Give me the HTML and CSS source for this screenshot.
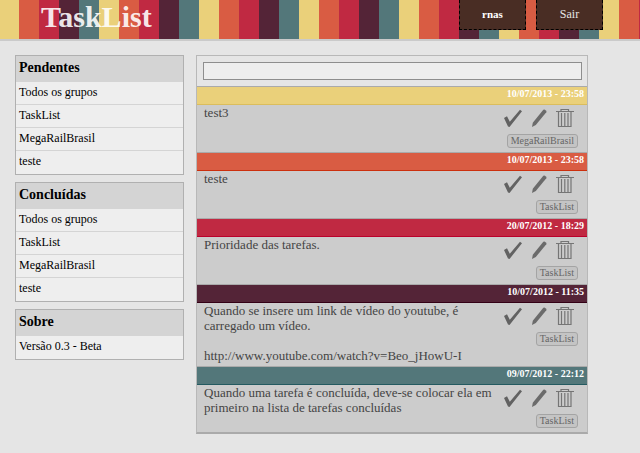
FILE: index.html
```html
<!DOCTYPE html>
<html lang="pt-BR">
<head>
<meta charset="utf-8">
<title>TaskList</title>
<link rel="stylesheet" href="styles.css">
</head>
<body>
<svg class="sprite" aria-hidden="true">
  <symbol id="check" viewBox="0 0 20 20"><path d="M1 10 4 8.300 6.800 13.800 17 1.800 19 3.300 6.500 19 5 18.500Z" fill="#626262"/></symbol>
  <symbol id="pencil" viewBox="0 0 20 20"><path d="M3 19 3.800 14.800 14.300 1.800 15.500 1.500 17.500 3 17.300 4.300 6.800 17Z" fill="#6b6b6b"/></symbol>
  <symbol id="trash" viewBox="0 0 20 20"><path d="M1 3.500H19M6 3V1.500H13.500V3M3.500 4V18.500H16V4M6.500 5V18M9.800 5V18M13 5V18" fill="none" stroke="#757575" stroke-width="1.200"/></symbol>
</svg>
<header class="top">
  <h1 class="logo">TaskList</h1>
  <nav class="nav">
    <a class="nav-item user" href="#">rnas</a>
    <a class="nav-item" href="#">Sair</a>
  </nav>
</header>
<div class="layout">
  <aside class="sidebar">
    <section class="panel">
      <h2>Pendentes</h2>
      <ul>
        <li><a href="#">Todos os grupos</a></li>
        <li><a href="#">TaskList</a></li>
        <li><a href="#">MegaRailBrasil</a></li>
        <li><a href="#">teste</a></li>
      </ul>
    </section>
    <section class="panel">
      <h2>Concluídas</h2>
      <ul>
        <li><a href="#">Todos os grupos</a></li>
        <li><a href="#">TaskList</a></li>
        <li><a href="#">MegaRailBrasil</a></li>
        <li><a href="#">teste</a></li>
      </ul>
    </section>
    <section class="panel">
      <h2>Sobre</h2>
      <ul>
        <li><a href="#">Versão 0.3 - Beta</a></li>
      </ul>
    </section>
  </aside>
  <main class="tasks">
    <form class="new-task"><input type="text" aria-label="Nova tarefa"></form>
    <article class="task">
      <div class="bar yellow"><time>10/07/2013 - 23:58</time></div>
      <div class="body">
        <p>test3</p>
        <div class="side">
          <div class="actions">
            <button type="button" aria-label="Concluir"><svg><use href="#check"/></svg></button>
            <button type="button" aria-label="Editar"><svg><use href="#pencil"/></svg></button>
            <button type="button" aria-label="Excluir"><svg><use href="#trash"/></svg></button>
          </div>
          <a class="tag" href="#">MegaRailBrasil</a>
        </div>
      </div>
    </article>
    <article class="task">
      <div class="bar orange"><time>10/07/2013 - 23:58</time></div>
      <div class="body">
        <p>teste</p>
        <div class="side">
          <div class="actions">
            <button type="button" aria-label="Concluir"><svg><use href="#check"/></svg></button>
            <button type="button" aria-label="Editar"><svg><use href="#pencil"/></svg></button>
            <button type="button" aria-label="Excluir"><svg><use href="#trash"/></svg></button>
          </div>
          <a class="tag" href="#">TaskList</a>
        </div>
      </div>
    </article>
    <article class="task">
      <div class="bar red"><time>20/07/2012 - 18:29</time></div>
      <div class="body">
        <p>Prioridade das tarefas.</p>
        <div class="side">
          <div class="actions">
            <button type="button" aria-label="Concluir"><svg><use href="#check"/></svg></button>
            <button type="button" aria-label="Editar"><svg><use href="#pencil"/></svg></button>
            <button type="button" aria-label="Excluir"><svg><use href="#trash"/></svg></button>
          </div>
          <a class="tag" href="#">TaskList</a>
        </div>
      </div>
    </article>
    <article class="task">
      <div class="bar wine"><time>10/07/2012 - 11:35</time></div>
      <div class="body">
        <p>Quando se insere um link de vídeo do youtube, é carregado um vídeo.<br><br>http://www.youtube.com/watch?v=Beo_jHowU-I</p>
        <div class="side">
          <div class="actions">
            <button type="button" aria-label="Concluir"><svg><use href="#check"/></svg></button>
            <button type="button" aria-label="Editar"><svg><use href="#pencil"/></svg></button>
            <button type="button" aria-label="Excluir"><svg><use href="#trash"/></svg></button>
          </div>
          <a class="tag" href="#">TaskList</a>
        </div>
      </div>
    </article>
    <article class="task">
      <div class="bar teal"><time>09/07/2012 - 22:12</time></div>
      <div class="body">
        <p>Quando uma tarefa é concluída, deve-se colocar ela em primeiro na lista de tarefas concluídas</p>
        <div class="side">
          <div class="actions">
            <button type="button" aria-label="Concluir"><svg><use href="#check"/></svg></button>
            <button type="button" aria-label="Editar"><svg><use href="#pencil"/></svg></button>
            <button type="button" aria-label="Excluir"><svg><use href="#trash"/></svg></button>
          </div>
          <a class="tag" href="#">TaskList</a>
        </div>
      </div>
    </article>
  </main>
</div>
</body>
</html>
```

FILE: styles.css
```css
* { box-sizing: border-box; }
body {
  margin: 0;
  background: #e5e5e5;
  color: #000;
  font-family: "Liberation Serif", "Times New Roman", serif;
}
h1, h2, p, ul { margin: 0; padding: 0; }
ul { list-style: none; }
a { color: inherit; text-decoration: none; }
.sprite { display: none; }

.top {
  display: flex;
  justify-content: space-between;
  align-items: flex-start;
  height: 41px;
  padding: 0 37px 0 41px;
  border-bottom: 2px solid #cacaca;
  background: repeating-linear-gradient(90deg, #ead07a 0 20px, #d95c43 20px 40px, #c02942 40px 60px, #542437 60px 80px, #53777a 80px 100px) -1px 0 / calc(100% + 1px) 100%;
}
.logo {
  color: rgba(255, 255, 255, 0.9);
  font-size: 30px;
  line-height: 34px;
}
.nav { display: flex; gap: 10px; }
.nav-item {
  width: 67px;
  height: 30px;
  border: 1px dashed #000;
  border-top: 0;
  background: #492d24;
  color: #e5e5e5;
  font-size: 12px;
  line-height: 28px;
  text-align: center;
}
.user { color: #fff; font-size: 11px; font-weight: bold; }

.layout {
  display: flex;
  align-items: flex-start;
  gap: 12px;
  padding: 14px 52px 20px 15px;
}
.sidebar {
  display: flex;
  flex: none;
  flex-direction: column;
  gap: 7px;
  width: 169px;
}
.panel { border: 1px solid #b0b0b0; background: #eee; }
.panel h2 {
  padding: 0 3px 2px;
  background: #d4d4d4;
  font-size: 14px;
  line-height: 24px;
}
.panel li {
  height: 23px;
  padding-left: 3px;
  border-bottom: 1px solid #d4d4d4;
  font-size: 12px;
  line-height: 20px;
}
.panel li:last-child { border-bottom: 0; }

.tasks {
  flex: 1;
  min-width: 0;
  border: 1px solid #b8b8b8;
  border-bottom: 2px solid #aaa;
}
.new-task { display: flex; padding: 6px 5px 6px 6px; }
.new-task input {
  width: 100%;
  height: 18px;
  padding: 0 4px;
  border: 1px solid #8e8e8e;
  border-radius: 0;
  background: #eee;
  font: 13px "Liberation Serif", serif;
}
.bar {
  height: 19px;
  padding-right: 3px;
  border-top: 1px solid #aaa;
  border-bottom: 1px solid;
  color: #fff;
  font-size: 10px;
  font-weight: bold;
  line-height: 14px;
  text-align: right;
}
.yellow { background: #ead07a; border-bottom-color: #dbbd5c; }
.orange { background: #d95c43; border-bottom-color: #cb2f0d; }
.red { background: #c02942; border-bottom-color: #bb002b; }
.wine { background: #542437; border-bottom-color: #330015; }
.teal { background: #53777a; border-bottom-color: #245a60; }
.bar time { color: #fff; }

.body {
  display: flex;
  justify-content: space-between;
  min-height: 47px;
  padding: 0 9px 3px 7px;
  background: #ccc;
}
.body p {
  flex: 1;
  min-width: 0;
  color: #444;
  font-size: 13px;
  line-height: 15px;
}
.side {
  display: flex;
  flex: none;
  flex-direction: column;
  align-items: flex-end;
  gap: 6px;
  padding-top: 3px;
}
.actions { display: flex; gap: 6px; padding-right: 3px; }
.actions button {
  width: 20px;
  height: 20px;
  padding: 0;
  border: 0;
  background: none;
}
.actions svg { display: block; width: 20px; height: 20px; }
.tag {
  height: 14px;
  padding: 0 3px;
  border: 1px solid #a4a4a4;
  border-radius: 3px;
  background: #c4c4c4;
  color: #666;
  font-size: 10px;
  line-height: 12px;
}
```
